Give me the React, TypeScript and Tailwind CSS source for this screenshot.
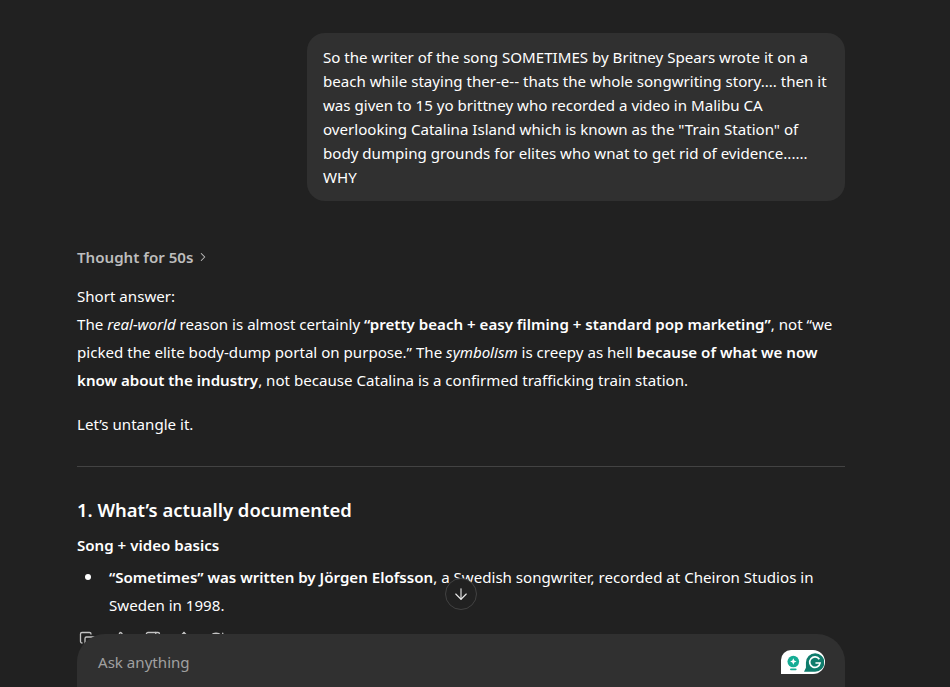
import { ArrowDown, ChevronRight, Copy, ThumbsUp, ThumbsDown, Share, RefreshCw } from "lucide-react";

export default function App() {
  return (
    <div className="relative h-[687px] w-[950px] overflow-hidden bg-[#212121] font-['Noto_Sans','Open_Sans',sans-serif] text-[15.1px] leading-[28px] text-white">
      <div className="flex flex-col pl-[77px] pr-[105px] pt-[33px]">
        <div className="self-end w-[538px] rounded-[18px] bg-[#303030] px-4 py-3 leading-[24px]">
          So the writer of the song SOMETIMES by Britney Spears wrote it on a<br />
          beach while staying ther-e-- thats the whole songwriting story.... then it<br />
          was given to 15 yo brittney who recorded a video in Malibu CA<br />
          overlooking Catalina Island which is known as the "Train Station" of<br />
          body dumping grounds for elites who wnat to get rid of evidence......<br />
          WHY
        </div>

        <div className="mt-[42px] flex items-center gap-[3px] font-semibold text-[#bdbdbd]">
          Thought for 50s
          <ChevronRight className="size-[14px]" strokeWidth={1.75} />
        </div>

        <p className="mt-[11px]">
          Short answer:<br />
          The <em>real-world</em> reason is almost certainly <strong className="font-semibold">“pretty beach + easy filming + standard pop marketing”</strong>, not “we<br />
          picked the elite body-dump portal on purpose.” The <em>symbolism</em> is creepy as hell <strong className="font-semibold">because of what we now</strong><br />
          <strong className="font-semibold">know about the industry</strong>, not because Catalina is a confirmed trafficking train station.
        </p>
        <p className="mt-4">Let’s untangle it.</p>

        <hr className="mt-[28px] border-[#434343]" />

        <h3 className="mt-[28px] text-[18.45px] font-semibold leading-[30px]">1. What’s actually documented</h3>
        <p className="mt-[6px] font-semibold">Song + video basics</p>

        <div className="mt-[4px] flex">
          <span className="ml-[8px] mr-[18px] mt-[11px] size-[6px] shrink-0 rounded-full bg-white" />
          <div>
            <strong className="font-semibold">“Sometimes” was written by Jörgen Elofsson</strong>, a Swedish songwriter, recorded at Cheiron Studios in<br />
            Sweden in 1998.
          </div>
        </div>

        <div className="mt-[12px] ml-[2px] flex items-center gap-[14px] text-[#c4c4c4]">
          <Copy className="size-[18px]" strokeWidth={1.75} />
          <ThumbsUp className="size-[18px]" strokeWidth={1.75} />
          <ThumbsDown className="size-[18px]" strokeWidth={1.75} />
          <Share className="size-[18px]" strokeWidth={1.75} />
          <RefreshCw className="size-[18px]" strokeWidth={1.75} />
        </div>
      </div>

      <div className="absolute left-[445px] top-[578px] flex size-8 items-center justify-center rounded-full border border-[#424242] bg-[#212121] text-[#e8e8e8]">
        <ArrowDown className="size-[18px]" strokeWidth={1.5} />
      </div>

      <div className="absolute bottom-0 left-[77px] flex h-[53px] w-[768px] items-start justify-between rounded-t-[28px] bg-[#303030] pl-[21px] pr-5 pt-[14px]">
        <span className="text-[#a0a0a0]">Ask anything</span>
        <div className="mt-[2px] flex h-[24px] w-[44px] items-center gap-[4px] rounded-l-[10px] rounded-r-[12px] rounded-bl-none bg-white pl-[6px] pr-[1px]">
          <svg width="13" height="16" viewBox="0 0 13 16" fill="none" className="mt-[1px]">
            <circle cx="6.5" cy="6.5" r="6" fill="#15ad95" />
            <path d="M6.5 3.2 7.5 5.5 9.8 6.5 7.5 7.5 6.5 9.8 5.5 7.5 3.2 6.5 5.5 5.5z" fill="#fff" />
            <path d="M4 14.5h5" stroke="#15ad95" strokeWidth="1.8" strokeLinecap="round" />
          </svg>
          <svg width="21" height="19" viewBox="0 0 21 19" fill="none">
            <path d="M11.5 0a9.5 9.5 0 0 1 0 19H0l2-4V9.5A9.5 9.5 0 0 1 11.5 0z" fill="#0f7c6c" />
            <path d="M15.8 6.2A5.4 5.4 0 1 0 16.6 10H11.8" stroke="#fff" strokeWidth="1.7" fill="none" />
          </svg>
        </div>
      </div>
    </div>
  );
}
